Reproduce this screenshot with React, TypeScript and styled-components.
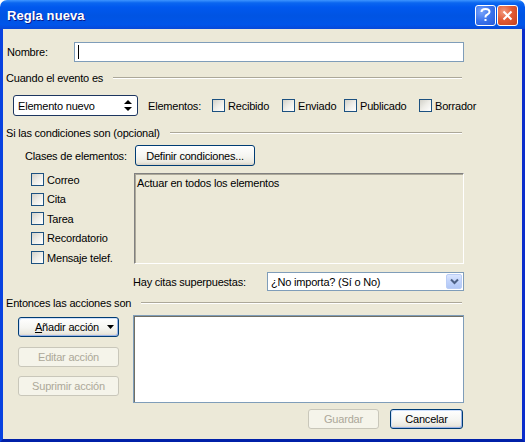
import styled, { createGlobalStyle } from "styled-components";

const GlobalStyle = createGlobalStyle`
  html, body {
    margin: 0;
    padding: 0;
    background: #ffffff;
  }
  body {
    font-family: "Liberation Sans", Arial, sans-serif;
    font-size: 11px;
    letter-spacing: -0.2px;
    color: #000;
  }
  * {
    box-sizing: border-box;
  }
`;

const Window = styled.div`
  width: 525px;
  height: 442px;
  display: flex;
  flex-direction: column;
  border-radius: 7px 7px 0 0;
  overflow: hidden;
`;

const TitleBar = styled.div`
  height: 29px;
  flex-shrink: 0;
  display: flex;
  align-items: center;
  justify-content: space-between;
  padding: 1px 7px 0 7px;
  background: linear-gradient(
    to bottom,
    #3d95ff 0%,
    #0a66f0 10%,
    #0058ee 25%,
    #0054e3 55%,
    #0055ea 85%,
    #0848d8 100%
  );
`;

const Title = styled.span`
  color: #fff;
  font-family: "Liberation Sans", Arial, sans-serif;
  font-weight: bold;
  font-size: 13px;
  text-shadow: 1px 1px 0 #0a1a8a;
  letter-spacing: 0.1px;
`;

const TitleButtons = styled.div`
  display: flex;
  gap: 1px;
`;

const CaptionButton = styled.div<{ $variant: "help" | "close" }>`
  width: 21px;
  height: 21px;
  border: 1px solid #fff;
  border-radius: 3px;
  display: flex;
  align-items: center;
  justify-content: center;
  background: ${(p) =>
    p.$variant === "close"
      ? "radial-gradient(circle at 30% 30%, #f29a7e 0%, #e25b35 45%, #c4401d 100%)"
      : "radial-gradient(circle at 30% 30%, #7aa4fb 0%, #3a73ec 50%, #2458d8 100%)"};
`;

const Frame = styled.div`
  flex: 1;
  display: flex;
  min-width: 0;
  border-left: 3px solid #0842e0;
  border-right: 3px solid #0a2dcc;
  border-bottom: 3px solid #0020a8;
`;

const Client = styled.div`
  flex: 1;
  min-width: 0;
  background: #ece9d8;
  padding: 13px 58px 0 3px;
  display: flex;
  flex-direction: column;
`;

const NameRow = styled.div`
  display: flex;
  align-items: center;
  height: 20px;
`;

const FieldLabel = styled.span<{ $width?: number }>`
  width: ${(p) => (p.$width ? `${p.$width}px` : "auto")};
  flex-shrink: 0;
  padding-left: 1px;
  white-space: nowrap;
`;

const NameInput = styled.div`
  flex: 1;
  height: 20px;
  background: #fff;
  border: 1px solid #7f9db9;
  display: flex;
  align-items: center;
  padding-left: 3px;
`;

const Caret = styled.span`
  width: 1px;
  height: 14px;
  background: #000;
`;

const Heading = styled.div<{ $top: number }>`
  display: flex;
  align-items: center;
  gap: 10px;
  height: 14px;
  margin-top: ${(p) => p.$top}px;
  white-space: nowrap;
`;

const HeadingLine = styled.div`
  flex: 1;
  height: 2px;
  margin-right: 2px;
  border-top: 1px solid #aca899;
  border-bottom: 1px solid #fff;
`;

const EventRow = styled.div`
  display: flex;
  align-items: center;
  height: 21px;
  margin-top: 10px;
  padding-left: 7px;
`;

const SpinSelect = styled.div`
  width: 125px;
  height: 21px;
  flex-shrink: 0;
  background: #fff;
  border: 1px solid #1d3660;
  border-radius: 3px;
  display: flex;
  align-items: center;
  justify-content: space-between;
  padding: 0 5px 0 4px;
  margin-right: 9px;
`;

const CheckItem = styled.div<{ $width?: number }>`
  display: flex;
  align-items: center;
  gap: 3px;
  height: 13px;
  flex-shrink: 0;
  width: ${(p) => (p.$width ? `${p.$width}px` : "auto")};
  white-space: nowrap;
`;

const CheckBox = styled.span`
  width: 13px;
  height: 13px;
  flex-shrink: 0;
  border: 1px solid #1c5180;
  background: linear-gradient(135deg, #d2d1c9 0%, #eeede8 50%, #ffffff 100%);
`;

const ConditionsGrid = styled.div`
  display: grid;
  grid-template-columns: 128px 330px;
  margin-top: 5px;
`;

const ClassesLabel = styled.span`
  display: flex;
  align-items: center;
  height: 21px;
  padding-left: 19px;
  white-space: nowrap;
`;

const Button = styled.button<{ $width: number; $height?: number; $default?: boolean }>`
  width: ${(p) => p.$width}px;
  height: ${(p) => p.$height ?? 20}px;
  padding: 0;
  font-family: "Liberation Sans", Arial, sans-serif;
  font-size: 11px;
  letter-spacing: -0.2px;
  color: #000;
  border: 1px solid #003c74;
  border-radius: 3px;
  display: flex;
  align-items: center;
  justify-content: center;
  background: linear-gradient(
    to bottom,
    #ffffff 0%,
    #f5f5f1 55%,
    #ebe9e0 85%,
    #d8d2c6 100%
  );
  box-shadow: ${(p) => (p.$default ? "inset -1px -1px 0 #9bb4e8, inset 1px 1px 0 #cfe0fb" : "none")};

  &:disabled {
    color: #aca899;
    border-color: #c9c7ba;
    background: #f5f4ea;
    box-shadow: none;
  }
`;

const DefineButton = styled(Button)`
  margin-left: 1px;
`;

const ClassList = styled.div`
  display: flex;
  flex-direction: column;
  gap: 6.5px;
  padding-left: 25px;
  margin-top: 7px;
`;

const ConditionBox = styled.div`
  margin-top: 7px;
  height: 91px;
  border-top: 1px solid #808080;
  border-left: 1px solid #808080;
  border-right: 1px solid #fff;
  border-bottom: 1px solid #fff;
  box-shadow: inset 1px 1px 0 #aca899;
  padding: 3px 0 0 2px;
`;

const OverlapRow = styled.div`
  grid-column: 2;
  display: flex;
  align-items: center;
  margin-top: 8px;
  margin-left: -1px;
`;

const OverlapLabel = styled.span`
  width: 134px;
  white-space: nowrap;
`;

const Combo = styled.div`
  width: 197px;
  height: 19px;
  background: #fff;
  border: 1px solid #7f9db9;
  display: flex;
  align-items: center;
  justify-content: space-between;
  padding: 0 1px 0 3px;
`;

const ComboButton = styled.span`
  width: 16px;
  height: 15px;
  border: 1px solid #bacdf6;
  border-radius: 2px;
  background: linear-gradient(to bottom, #dbe6fe 0%, #c1d3fb 50%, #b1c7f5 100%);
  display: flex;
  align-items: center;
  justify-content: center;
`;

const ActionsGrid = styled.div`
  display: grid;
  grid-template-columns: 127px 331px;
  margin-top: 5px;
`;

const ActionButtons = styled.div`
  display: flex;
  flex-direction: column;
  gap: 9.5px;
  padding: 2px 0 0 12px;
`;

const AddButton = styled(Button)`
  padding-left: 12px;
  gap: 8px;
`;

const ActionList = styled.div`
  height: 88px;
  background: #fff;
  border: 1px solid #7f9db9;
  box-shadow: inset 1px 1px 0 #716f64;
`;

const Footer = styled.div`
  display: flex;
  justify-content: flex-end;
  gap: 11px;
  margin-top: 6px;
  padding-right: 1px;
`;

const SpinArrows = () => (
  <svg width="8" height="11" viewBox="0 0 8 11">
    <path d="M4 0 L8 4 L0 4 Z" fill="#000" />
    <path d="M0 7 L8 7 L4 11 Z" fill="#000" />
  </svg>
);

const Chevron = () => (
  <svg width="9" height="7" viewBox="0 0 9 7">
    <path d="M1 1.5 L4.5 5 L8 1.5" fill="none" stroke="#4d6185" strokeWidth="2" />
  </svg>
);

const DownTriangle = () => (
  <svg width="7" height="4" viewBox="0 0 7 4">
    <path d="M0 0 L7 0 L3.5 4 Z" fill="#000" />
  </svg>
);

const eventKinds = [
  { label: "Recibido", width: 70 },
  { label: "Enviado", width: 62 },
  { label: "Publicado", width: 75 },
  { label: "Borrador" },
];

const itemClasses = ["Correo", "Cita", "Tarea", "Recordatorio", "Mensaje telef."];

const App = () => {
  return (
    <>
      <GlobalStyle />
      <Window>
        <TitleBar>
          <Title>Regla nueva</Title>
          <TitleButtons>
            <CaptionButton $variant="help">
              <svg width="11" height="14" viewBox="0 0 11 14">
                <path
                  d="M1.5 4 C1.5 1.8 3 1 5.5 1 C8 1 9.5 2.2 9.5 4 C9.5 6 7 6.5 6 7.5 C5.5 8 5.5 8.5 5.5 9.5"
                  fill="none"
                  stroke="#fff"
                  strokeWidth="2"
                />
                <rect x="4.5" y="11" width="2" height="2" fill="#fff" />
              </svg>
            </CaptionButton>
            <CaptionButton $variant="close">
              <svg width="11" height="11" viewBox="0 0 11 11">
                <path d="M1.5 1.5 L9.5 9.5 M9.5 1.5 L1.5 9.5" stroke="#fff" strokeWidth="2" />
              </svg>
            </CaptionButton>
          </TitleButtons>
        </TitleBar>
        <Frame>
          <Client>
            <NameRow>
              <FieldLabel $width={68}>Nombre:</FieldLabel>
              <NameInput>
                <Caret />
              </NameInput>
            </NameRow>

            <Heading $top={9}>
              Cuando el evento es
              <HeadingLine />
            </Heading>

            <EventRow>
              <SpinSelect>
                Elemento nuevo
                <SpinArrows />
              </SpinSelect>
              <FieldLabel $width={65}>Elementos:</FieldLabel>
              {eventKinds.map((k) => (
                <CheckItem key={k.label} $width={k.width}>
                  <CheckBox />
                  {k.label}
                </CheckItem>
              ))}
            </EventRow>

            <Heading $top={10}>
              Si las condiciones son (opcional)
              <HeadingLine />
            </Heading>

            <ConditionsGrid>
              <ClassesLabel>Clases de elementos:</ClassesLabel>
              <DefineButton type="button" $width={120} $height={21}>
                Definir condiciones...
              </DefineButton>
              <ClassList>
                {itemClasses.map((c) => (
                  <CheckItem key={c}>
                    <CheckBox />
                    {c}
                  </CheckItem>
                ))}
              </ClassList>
              <ConditionBox>Actuar en todos los elementos</ConditionBox>
              <OverlapRow>
                <OverlapLabel>Hay citas superpuestas:</OverlapLabel>
                <Combo>
                  ¿No importa? (Sí o No)
                  <ComboButton>
                    <Chevron />
                  </ComboButton>
                </Combo>
              </OverlapRow>
            </ConditionsGrid>

            <Heading $top={5}>
              Entonces las acciones son
              <HeadingLine />
            </Heading>

            <ActionsGrid>
              <ActionButtons>
                <AddButton type="button" $width={101} $default>
                  <span>
                    <u>A</u>ñadir acción
                  </span>
                  <DownTriangle />
                </AddButton>
                <Button type="button" $width={101} disabled>
                  Editar acción
                </Button>
                <Button type="button" $width={101} disabled>
                  Suprimir acción
                </Button>
              </ActionButtons>
              <ActionList />
            </ActionsGrid>

            <Footer>
              <Button type="button" $width={71} disabled>
                Guardar
              </Button>
              <Button type="button" $width={73} $default>
                Cancelar
              </Button>
            </Footer>
          </Client>
        </Frame>
      </Window>
    </>
  );
};

export default App;
